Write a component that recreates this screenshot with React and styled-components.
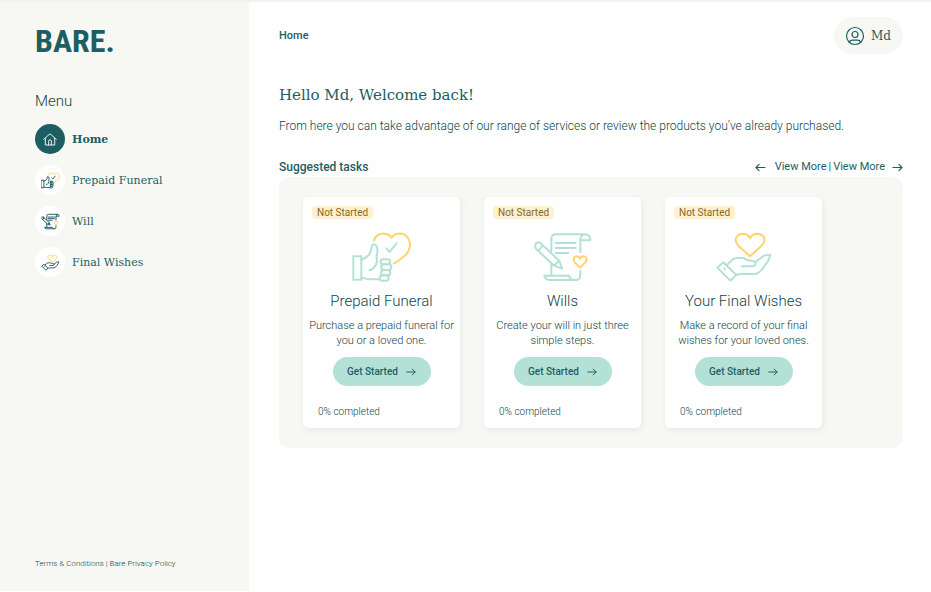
import React from "react";
import styled, { createGlobalStyle } from "styled-components";

const sans = `Roboto, "Liberation Sans", sans-serif`;
const serif = `"DejaVu Serif", "Liberation Serif", serif`;
const teal = "#1e5e62";
const deepTeal = "#0f4347";
const mint = "#b4e1d6";
const gold = "#fdd471";
const cream = "#f7f8f4";

const GlobalStyle = createGlobalStyle`
  * { box-sizing: border-box; }
  body { margin: 0; background: #fff; color: ${teal}; font-family: ${sans}; font-size: 12px; }
  h1, h2, h3, p, ul { margin: 0; padding: 0; font-weight: 400; }
  button { font: inherit; color: inherit; border: 0; background: none; padding: 0; cursor: pointer; }
  a { color: inherit; text-decoration: none; }
  svg { display: block; flex: none; }
`;

const Page = styled.div`
  display: flex;
  min-height: 100vh;
  border-top: 2px solid #f0f1f1;
  border-bottom: 1px solid #fff;
`;

const Sidebar = styled.aside`
  display: flex;
  flex-direction: column;
  flex: 0 0 249px;
  padding: 19px 34px 21px 35px;
  background: ${cream};
`;

const Logo = styled.a`
  font-family: "Roboto Condensed", "Liberation Sans Narrow", ${sans};
  font-weight: 700;
  font-size: 32px;
  line-height: 40px;
`;

const MenuTitle = styled.h2`
  && { font-weight: 300; }
  margin-top: 30px;
  color: ${deepTeal};
  font-size: 15px;
  line-height: 20px;
`;

const MenuList = styled.ul`
  display: flex;
  flex-direction: column;
  gap: 11px;
  margin-top: 13px;
  list-style: none;
`;

const MenuLink = styled.a`
  display: flex;
  align-items: center;
  gap: 7px;
  font-family: ${serif};
  font-size: 11px;
  font-weight: ${(p) => (p.$active ? 700 : 400)};
`;

const MenuIcon = styled.span`
  display: grid;
  place-items: center;
  width: 30px;
  height: 30px;
  border-radius: 50%;
  background: ${(p) => (p.$active ? teal : "#fff")};
`;

const Legal = styled.footer`
  margin-top: auto;
  color: ${deepTeal};
  font-size: 8px;
  font-weight: 300;
  line-height: 12px;
  white-space: nowrap;
`;

const Main = styled.main`
  flex: 1;
  min-width: 0;
  padding: 15px 28px 24px 30px;
`;

const TopBar = styled.header`
  display: flex;
  align-items: center;
  justify-content: space-between;
`;

const Crumb = styled.a`
  font-size: 11px;
  font-weight: 500;
`;

const UserButton = styled.button`
  display: flex;
  align-items: center;
  gap: 6px;
  height: 37px;
  padding: 0 12px 0 11px;
  border-radius: 20px;
  && { background: ${cream}; font-family: ${serif}; font-size: 12px; }
`;

const Greeting = styled.h1`
  margin-top: 31px;
  font-family: ${serif};
  font-size: 15px;
  line-height: 20px;
`;

const Intro = styled.p`
  && { font-weight: 300; }
  margin-top: 12px;
  color: ${deepTeal};
  font-size: 12px;
  line-height: 18px;
`;

const SectionHead = styled.div`
  display: flex;
  align-items: center;
  justify-content: space-between;
  margin-top: 22px;
  line-height: 20px;
`;

const SectionTitle = styled.h2`
  && { font-weight: 500; }
  font-size: 12px;
`;

const Pager = styled.nav`
  display: flex;
  align-items: center;
  gap: 2px;
  font-size: 11px;
`;

const PagerButton = styled.button`
  display: flex;
  align-items: center;
  gap: ${(p) => (p.$wide ? 9 : 7)}px;
`;

const Panel = styled.section`
  display: flex;
  flex-wrap: wrap;
  gap: 24px;
  padding: 20px 24px;
  border-radius: 10px;
  background: ${cream};
`;

const Card = styled.article`
  display: flex;
  flex-direction: column;
  align-items: center;
  width: 157px;
  padding: 9px 8px 8px;
  border-radius: 5px;
  background: #fff;
  box-shadow: 1px 2px 6px rgba(30, 60, 60, 0.08);
`;

const Badge = styled.span`
  align-self: flex-start;
  margin-left: 1px;
  padding: 0 5px;
  border-radius: 4px;
  background: #fef1cf;
  color: #8a661c;
  font-size: 10px;
  line-height: 13px;
`;

const CardArt = styled.div`
  margin-top: 12px;
`;

const CardTitle = styled.h3`
  && { font-weight: 300; }
  margin-top: 8px;
  color: ${deepTeal};
  font-size: 15px;
  line-height: 20px;
  white-space: nowrap;
`;

const CardText = styled.p`
  && { font-weight: 300; }
  margin-top: 7px;
  color: ${deepTeal};
  font-size: 11px;
  line-height: 15px;
  text-align: center;
  white-space: nowrap;
`;

const StartButton = styled.button`
  display: flex;
  align-items: center;
  justify-content: center;
  gap: 8px;
  width: 98px;
  height: 29px;
  margin-top: 9px;
  border-radius: 15px;
  && { background: ${mint}; font-size: 10px; font-weight: 500; }
`;

const Progress = styled.span`
  align-self: flex-start;
  margin: 18px 0 0 7px;
  color: ${deepTeal};
  font-size: 10px;
  font-weight: 300;
  line-height: 16px;
`;

const Art = styled.svg`
  fill: none;
  stroke: ${(p) => p.$ink};
  stroke-width: ${(p) => p.$weight};
  stroke-linecap: round;
  stroke-linejoin: round;
  .gold { stroke: ${gold}; }
`;

const artwork = {
  funeral: {
    box: "34 18 180 156",
    shapes: (
      <>
        <path d="M38 94h24v70H38z" />
        <path d="M62 104C80 98 92 85 93 65Q94 57 101 58C111 61 113 80 107 96C112 110 105 131 86 136M62 160H74Q80 163 90 163H117" />
        <rect x="120" y="103" width="28" height="15" rx="7" />
        <rect x="122" y="118" width="30" height="17" rx="8" />
        <rect x="121" y="135" width="28" height="16" rx="8" />
        <rect x="117" y="151" width="27" height="16" rx="8" />
        <path d="M137 70L147 81L168 54" />
        <path className="gold" d="M100 47C102 32 118 24 133 26Q147 28 153 38C163 22 190 20 203 40C212 58 208 75 195 90Q180 104 160 116" />
      </>
    ),
  },
  will: {
    box: "24 18 180 156",
    shapes: (
      <>
        <path d="M79 78V42Q79 28 93 28H181Q196 29 196 46H166V82M181 28Q166 30 166 46M79 114V152M166 137V150Q166 165 152 165H74Q60 164 58 152H132Q135 165 150 165" />
        <path d="M92 54H152M92 69H152M92 84H130" />
        <path d="M46 54L103 107L111 131L87 122L33 71Q28 60 34 54Q40 49 46 54ZM53 62L40 77M103 107L88 121" />
        <path className="gold" d="M165 128L149 112C142 103 147 93 156 94Q163 95 165 101Q168 94 176 94C186 95 188 104 181 112Z" />
      </>
    ),
  },
  wishes: {
    box: "28 18 180 156",
    shapes: (
      <>
        <path d="M38 128L56 112L95 150L77 167ZM59 131L61 133" />
        <path d="M67 120L84 103Q90 99 100 99H118Q125 106 140 107Q153 108 153 116Q152 124 140 124H111M152 111L175 94Q185 88 197 90Q194 105 180 122Q166 145 150 147H110L94 149" />
        <path className="gold" d="M136 94L101 62C87 48 92 28 113 26Q130 26 136 40Q142 26 159 26C182 28 185 48 171 62Z" />
      </>
    ),
  },
};

function Artwork({ name, small }) {
  const { box, shapes } = artwork[name];
  return (
    <Art
      viewBox={box}
      width={small ? 19 : 60}
      height={small ? 17 : 52}
      $ink={small ? teal : mint}
      $weight={small ? 9 : 6}
      aria-hidden="true"
    >
      {shapes}
    </Art>
  );
}

function HomeIcon() {
  return (
    <Art viewBox="0 0 14 13" width="14" height="13" $ink="#fff" $weight="0.9" aria-hidden="true">
      <path d="M.7 6.3L7 .8L13.3 6.3M2.3 5.4V12H11.7V5.4M5.6 12V8.2Q5.6 6.8 7 6.8T8.4 8.2V12" />
    </Art>
  );
}

function UserIcon() {
  return (
    <Art viewBox="0 0 20 20" width="20" height="20" $ink={teal} $weight="1.2" aria-hidden="true">
      <circle cx="10" cy="10" r="8.5" />
      <circle cx="10" cy="8.5" r="3" />
      <path d="M4.2 16.2Q5.2 14.2 7.5 14.2H12.5Q14.8 14.2 15.8 16.2" />
    </Art>
  );
}

function Arrow({ left, size = 11 }) {
  return (
    <Art viewBox="0 0 12 10" width={size} height={size} $ink={teal} $weight="1.2" aria-hidden="true">
      <path d={left ? "M11 5H1M4.5 1.5L1 5L4.5 8.5" : "M1 5H11M7.5 1.5L11 5L7.5 8.5"} />
    </Art>
  );
}

const menu = [
  { label: "Home", active: true },
  { label: "Prepaid Funeral", art: "funeral" },
  { label: "Will", art: "will" },
  { label: "Final Wishes", art: "wishes" },
];

const tasks = [
  { title: "Prepaid Funeral", art: "funeral", text: ["Purchase a prepaid funeral for", "you or a loved one."] },
  { title: "Wills", art: "will", text: ["Create your will in just three", "simple steps."] },
  { title: "Your Final Wishes", art: "wishes", text: ["Make a record of your final", "wishes for your loved ones."] },
];

export default function App() {
  return (
    <>
      <GlobalStyle />
      <Page>
        <Sidebar>
          <Logo href="#">BARE.</Logo>
          <MenuTitle>Menu</MenuTitle>
          <nav aria-label="Menu">
            <MenuList>
              {menu.map((m) => (
                <li key={m.label}>
                  <MenuLink href="#" $active={m.active}>
                    <MenuIcon $active={m.active}>
                      {m.art ? <Artwork name={m.art} small /> : <HomeIcon />}
                    </MenuIcon>
                    {m.label}
                  </MenuLink>
                </li>
              ))}
            </MenuList>
          </nav>
          <Legal>
            <a href="#">Terms &amp; Conditions</a> | <a href="#">Bare Privacy Policy</a>
          </Legal>
        </Sidebar>
        <Main>
          <TopBar>
            <Crumb href="#">Home</Crumb>
            <UserButton type="button">
              <UserIcon />
              Md
            </UserButton>
          </TopBar>
          <Greeting>Hello Md, Welcome back!</Greeting>
          <Intro>
            From here you can take advantage of our range of services or review the products you’ve
            already purchased.
          </Intro>
          <SectionHead>
            <SectionTitle>Suggested tasks</SectionTitle>
            <Pager aria-label="Suggested tasks">
              <PagerButton type="button" $wide>
                <Arrow left />
                View More
              </PagerButton>
              <span>|</span>
              <PagerButton type="button">
                View More
                <Arrow />
              </PagerButton>
            </Pager>
          </SectionHead>
          <Panel>
            {tasks.map((t) => (
              <Card key={t.title}>
                <Badge>Not Started</Badge>
                <CardArt>
                  <Artwork name={t.art} />
                </CardArt>
                <CardTitle>{t.title}</CardTitle>
                <CardText>
                  {t.text[0]}
                  <br />
                  {t.text[1]}
                </CardText>
                <StartButton type="button">
                  Get Started
                  <Arrow size={10} />
                </StartButton>
                <Progress>0% completed</Progress>
              </Card>
            ))}
          </Panel>
        </Main>
      </Page>
    </>
  );
}
